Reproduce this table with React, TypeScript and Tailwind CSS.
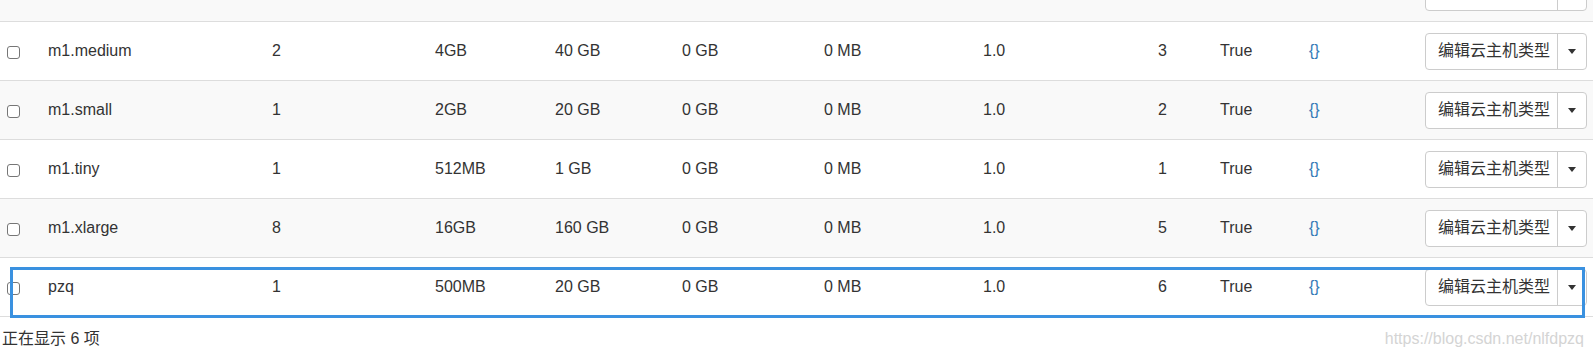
import React from "react";

type Row = {
  name: string;
  cpu: string;
  ram: string;
  disk: string;
  id: string;
  striped: boolean;
  highlight?: boolean;
};

const rows: Row[] = [
  { name: "m1.medium", cpu: "2", ram: "4GB", disk: "40 GB", id: "3", striped: false },
  { name: "m1.small", cpu: "1", ram: "2GB", disk: "20 GB", id: "2", striped: true },
  { name: "m1.tiny", cpu: "1", ram: "512MB", disk: "1 GB", id: "1", striped: false },
  { name: "m1.xlarge", cpu: "8", ram: "16GB", disk: "160 GB", id: "5", striped: true },
  { name: "pzq", cpu: "1", ram: "500MB", disk: "20 GB", id: "6", striped: false, highlight: true },
];

const grid =
  "grid grid-cols-[48px_224px_163px_120px_127px_142px_159px_175px_62px_89px_116px_1fr] items-center h-[58px]";

function ActionButton() {
  return (
    <div className="flex h-[37px] w-[162px] rounded-[4px] border border-[#cccccc] bg-white">
      <div className="flex w-[131px] items-center pl-[12px] text-[16px] text-[#333333]">
        编辑云主机类型
      </div>
      <div className="flex flex-1 items-center justify-center border-l border-[#cccccc]">
        <div className="h-0 w-0 border-l-[4px] border-r-[4px] border-t-[5px] border-l-transparent border-r-transparent border-t-[#333333]" />
      </div>
    </div>
  );
}

function RowCells({ r }: { r: Row }) {
  return (
    <>
      <div className="pl-[7px] pt-[3px]">
        <div className="h-[13px] w-[13px] rounded-[3px] border border-[#767676] bg-white" />
      </div>
      <div>{r.name}</div>
      <div>{r.cpu}</div>
      <div>{r.ram}</div>
      <div>{r.disk}</div>
      <div>0 GB</div>
      <div>0 MB</div>
      <div>1.0</div>
      <div>{r.id}</div>
      <div>True</div>
      <div className="text-[#337ab7]">{"{}"}</div>
      <div>
        <ActionButton />
      </div>
    </>
  );
}

export default function App() {
  const top: Row = { name: "m1.large", cpu: "4", ram: "8GB", disk: "80 GB", id: "4", striped: true };
  return (
    <div
      className="w-[1593px] h-[352px] overflow-hidden bg-white text-[16px] text-[#333333]"
      style={{ fontFamily: '"Liberation Sans", "Noto Sans CJK SC", Arial, sans-serif' }}
    >
      <div className="border-b border-[#dddddd]">
        <div className="flex h-[21px] flex-col justify-end overflow-hidden bg-[#f9f9f9]">
          <div className={`${grid} shrink-0`}>
            <RowCells r={top} />
          </div>
        </div>
        {rows.map((r) => (
          <div
            key={r.name}
            className={`relative border-t border-[#dddddd] ${r.striped ? "bg-[#f9f9f9]" : "bg-white"}`}
          >
            <div className={grid}>
              <RowCells r={r} />
            </div>
            {r.highlight && (
              <div className="pointer-events-none absolute left-[10px] right-[8px] top-[9px] h-[51px] border-[3px] border-[#3a91e0]" />
            )}
          </div>
        ))}
      </div>
      <div className="mt-[11px] flex items-start justify-between leading-[22px]">
        <div className="pl-[2px]">正在显示 6 项</div>
        <div className="pr-[9px] text-[16px] text-[#d4d4d4]">https://blog.csdn.net/nlfdpzq</div>
      </div>
    </div>
  );
}
